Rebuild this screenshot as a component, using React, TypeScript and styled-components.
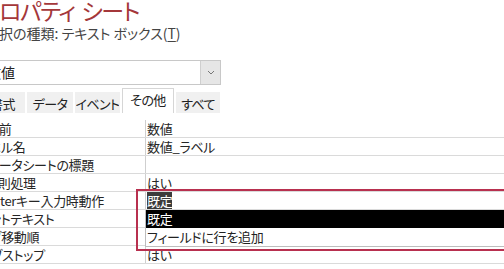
import React from 'react'
import styled, { createGlobalStyle } from 'styled-components'

const Global = createGlobalStyle`
    html, body {
        margin: 0;
        padding: 0;
        background: #fff;
        overflow: hidden;
    }
    body {
        font-family: "Noto Sans CJK JP", "Noto Sans", sans-serif;
        font-feature-settings: "palt";
        color: #262626;
    }
`

const Page = styled.div`
    position: relative;
    width: 504px;
    height: 269px;
    overflow: hidden;
    display: flex;
    flex-direction: column;
`

const Title = styled.h1`
    margin: -2px 0 0 -1px;
    height: 24px;
    font-size: 23px;
    line-height: 24px;
    letter-spacing: -1.4px;
    word-spacing: 3px;
    font-weight: 400;
    color: #a4373a;
    white-space: nowrap;
`

const Kind = styled.div`
    margin: 2px 0 0 -15px;
    height: 18px;
    font-size: 14px;
    line-height: 18px;
    color: #444;
    white-space: nowrap;

    u {
        text-decoration: underline;
        text-underline-offset: 2px;
    }
`

const Select = styled.div`
    display: flex;
    margin: 18px 0 0 -20px;
    width: 241px;
    height: 25px;
    box-sizing: border-box;
    border: 1px solid #c8c8c8;
    background: #fff;
`

const SelectValue = styled.div`
    flex: 1;
    padding-left: 6px;
    font-size: 14px;
    line-height: 23px;
    color: #222;
    white-space: nowrap;
    overflow: hidden;
`

const SelectButton = styled.div`
    width: 19px;
    display: flex;
    align-items: center;
    justify-content: center;
    background: #e6e6e6;
    border-left: 1px solid #cfcfcf;
`

const Tabs = styled.div`
    display: flex;
    align-items: flex-end;
    gap: 2px;
    height: 25px;
    margin: 3px 0 0 -20px;
`

const Tab = styled.div<{ $w: number; $active?: boolean }>`
    width: ${p => p.$w}px;
    height: ${p => (p.$active ? 25 : 21)}px;
    box-sizing: border-box;
    display: flex;
    align-items: center;
    justify-content: center;
    font-size: 13px;
    letter-spacing: -0.6px;
    color: #222;
    white-space: nowrap;
    overflow: hidden;
    background: ${p => (p.$active ? '#fff' : '#f0f0f0')};
    border: 1px solid ${p => (p.$active ? '#d6d6d6' : '#f0f0f0')};
    border-bottom: none;
    padding-bottom: ${p => (p.$active ? 4 : 0)}px;
`

const Sheet = styled.div`
    position: relative;
    padding-top: 7px;
`

const Row = styled.div`
    display: grid;
    grid-template-columns: 145px 1fr;
    height: 18px;
    box-sizing: border-box;
    border-bottom: 1px solid #dadada;
    font-size: 13px;
    line-height: 17px;
    letter-spacing: -0.3px;
`

const Label = styled.div<{ $shift: number }>`
    overflow: hidden;
    white-space: nowrap;

    span {
        display: inline-block;
        margin-left: ${p => p.$shift}px;
    }
`

const Value = styled.div`
    border-left: 1px solid #cfcfcf;
    padding-left: 1px;
    white-space: nowrap;
    overflow: hidden;
`

const Picked = styled.span`
    background: #3c3c3c;
    color: #fff;
`

const Frame = styled.div`
    position: absolute;
    left: 136px;
    top: 76px;
    right: -10px;
    height: 62px;
    box-sizing: border-box;
    border: 2px solid #b8304f;
    pointer-events: none;
`

const DropList = styled.div`
    position: absolute;
    left: 145px;
    top: 97px;
    right: 0;
    background: #fff;
    border-left: 1px solid #bdbdbd;
    border-bottom: 1px solid #bdbdbd;
    font-size: 13px;
    letter-spacing: -0.3px;
`

const Item = styled.div<{ $selected?: boolean }>`
    height: 18px;
    line-height: 18px;
    padding-left: 1px;
    white-space: nowrap;
    background: ${p => (p.$selected ? '#000' : '#fff')};
    color: ${p => (p.$selected ? '#fff' : '#222')};
`

type Prop = { label: string; shift: number; value?: React.ReactNode }

const rows: Prop[] = [
    { label: '名前', shift: -14, value: '数値' },
    { label: 'ラベル名', shift: -23, value: '数値_ラベル' },
    { label: 'データシートの標題', shift: -13 },
    { label: '禁則処理', shift: -15, value: 'はい' },
    { label: 'Enterキー入力時動作', shift: -15, value: <Picked>既定</Picked> },
    { label: 'ヒントテキスト', shift: -22 },
    { label: 'タブ移動順', shift: -21 },
    { label: 'タブストップ', shift: -20, value: 'はい' },
]

const Chevron = () => (
    <svg width="8" height="5" viewBox="0 0 8 5">
        <path d="M1 1 L4 4 L7 1" fill="none" stroke="#777" strokeWidth="1" />
    </svg>
)

const App: React.FC = () => (
    <Page>
        <Global />
        <Title>ロパティ シート</Title>
        <Kind>選択の種類: テキスト ボックス(<u>T</u>)</Kind>
        <Select>
            <SelectValue>数値</SelectValue>
            <SelectButton><Chevron /></SelectButton>
        </Select>
        <Tabs>
            <Tab $w={45}>書式</Tab>
            <Tab $w={46}>データ</Tab>
            <Tab $w={45}>イベント</Tab>
            <Tab $w={52} $active>その他</Tab>
            <Tab $w={44}>すべて</Tab>
        </Tabs>
        <Sheet>
            {rows.map(r => (
                <Row key={r.label}>
                    <Label $shift={r.shift}><span>{r.label}</span></Label>
                    <Value>{r.value}</Value>
                </Row>
            ))}
            <DropList>
                <Item $selected>既定</Item>
                <Item>フィールドに行を追加</Item>
            </DropList>
            <Frame />
        </Sheet>
    </Page>
)

export default App
